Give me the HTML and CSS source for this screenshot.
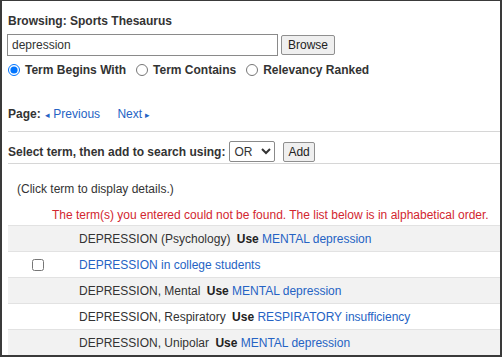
FILE: index.html
```html
<!DOCTYPE html>
<html lang="en">
<head>
    <meta charset="UTF-8">
    <meta name="viewport" content="width=device-width, initial-scale=1.0">
    <title>Browse Thesaurus</title>
    <link rel="stylesheet" href="styles.css">
</head>
<body>
    <div class="frame">
        <h1 class="title">Browsing: Sports Thesaurus</h1>

        <form class="search-row">
            <input type="text" class="term-input" value="depression">
            <button type="button" class="btn">Browse</button>
        </form>

        <div class="radio-row">
            <label><input type="radio" name="mode" checked> Term Begins With</label>
            <label><input type="radio" name="mode"> Term Contains</label>
            <label><input type="radio" name="mode"> Relevancy Ranked</label>
        </div>

        <div class="pager">
            <strong>Page:</strong>
            <a href="#" class="prev"><span class="arrow">&#9666;</span> Previous</a>
            <a href="#" class="next">Next <span class="arrow">&#9656;</span></a>
        </div>

        <div class="select-bar">
            <strong>Select term, then add to search using:</strong>
            <select class="op-select">
                <option>OR</option>
                <option>AND</option>
            </select>
            <button type="button" class="btn btn-add">Add</button>
        </div>

        <p class="hint">(Click term to display details.)</p>
        <p class="notice">The term(s) you entered could not be found. The list below is in alphabetical order.</p>

        <table class="terms">
            <tr>
                <td class="check"></td>
                <td>DEPRESSION (Psychology) <b class="use">Use</b> <a href="#">MENTAL depression</a></td>
            </tr>
            <tr>
                <td class="check"><input type="checkbox"></td>
                <td><a href="#">DEPRESSION in college students</a></td>
            </tr>
            <tr>
                <td class="check"></td>
                <td>DEPRESSION, Mental <b class="use">Use</b> <a href="#">MENTAL depression</a></td>
            </tr>
            <tr>
                <td class="check"></td>
                <td>DEPRESSION, Respiratory <b class="use">Use</b> <a href="#">RESPIRATORY insufficiency</a></td>
            </tr>
            <tr>
                <td class="check"></td>
                <td>DEPRESSION, Unipolar <b class="use">Use</b> <a href="#">MENTAL depression</a></td>
            </tr>
        </table>
    </div>
</body>
</html>
```

FILE: styles.css
```css
html, body {
    margin: 0;
    padding: 0;
    background: #fff;
}
body {
    font-family: "Liberation Sans", Arial, sans-serif;
    font-size: 12px;
    color: #333;
}
a {
    color: #2563c4;
    text-decoration: none;
}
.frame {
    box-sizing: border-box;
    width: 502px;
    height: 357px;
    overflow: hidden;
    border: 2px solid #3a3a3a;
    border-top-width: 1px;
    padding: 13px 0 0 6px;
}
.title {
    font-size: 12px;
    font-weight: bold;
    margin: 0 0 5px;
    line-height: 15px;
}
.search-row {
    display: flex;
    align-items: center;
    gap: 3px;
    margin: 0 0 0 -1px;
}
.term-input {
    box-sizing: border-box;
    width: 271px;
    height: 22px;
    border: 1px solid #8a8a8a;
    padding: 1px 4px;
    font: 12px "Liberation Sans", Arial, sans-serif;
    color: #333;
    margin: 0;
}
.btn {
    box-sizing: border-box;
    height: 20px;
    padding: 0 6px;
    font: 12px "Liberation Sans", Arial, sans-serif;
    color: #222;
    background: #efefef;
    border: 1px solid #8f8f8f;
    border-radius: 2px;
    margin: 0;
}
.btn-add {
    padding: 0 4px;
}
.radio-row {
    display: flex;
    gap: 9px;
    margin: 5px 0 0 -1px;
    font-weight: bold;
    line-height: 18px;
}
.radio-row label {
    display: flex;
    align-items: center;
}
.radio-row input {
    margin: 0 5px 0 1px;
    width: 12px;
    height: 12px;
}
.pager {
    margin-top: 27px;
    line-height: 16px;
}
.pager .prev {
    margin-left: 1px;
}
.pager .next {
    margin-left: 14px;
}
.arrow {
    font-size: 9px;
}
.select-bar {
    display: flex;
    align-items: center;
    gap: 3px;
    border-top: 1px solid #d6d6d6;
    border-bottom: 1px solid #d6d6d6;
    margin-top: 8px;
    padding: 9px 0 1px;
}
.op-select {
    box-sizing: border-box;
    width: 46px;
    height: 21px;
    margin: 0 5px 0 1px;
    font: 12px "Liberation Sans", Arial, sans-serif;
    color: #333;
    border: 1px solid #8a8a8a;
    background: #fff;
    border-radius: 2px;
}
.hint {
    margin: 17px 0 0 9px;
    line-height: 16px;
}
.notice {
    margin: 10px 0 0 44px;
    line-height: 16px;
    color: #d22630;
    white-space: nowrap;
}
.terms {
    width: 492px;
    border-collapse: collapse;
    margin-top: 2px;
}
.terms td {
    height: 25px;
    padding: 0;
    border-top: 1px solid #e2e2e2;
    line-height: 16px;
    white-space: nowrap;
}
.terms tr:nth-child(odd) td {
    background: #f2f2f2;
}
.terms .check {
    width: 71px;
}
.terms .check input {
    margin: 0 0 0 24px;
    width: 12px;
    height: 12px;
    display: block;
}
.use {
    margin-left: 3px;
    color: #222;
}
```
